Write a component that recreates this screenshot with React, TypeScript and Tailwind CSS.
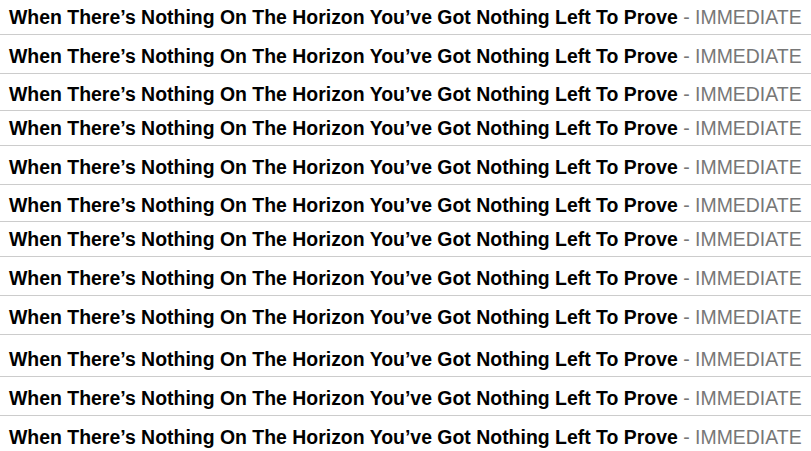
import React from "react";

const rows = [
  "pt-[6px] pb-[6px]",
  "pt-[10px] pb-[6px]",
  "pt-[9px] pb-[5px]",
  "pt-[6px] pb-[6px]",
  "pt-[10px] pb-[6px]",
  "pt-[9px] pb-[5px]",
  "pt-[6px] pb-[6px]",
  "pt-[10px] pb-[6px]",
  "pt-[10px] pb-[6px]",
  "pt-[13px] pb-[6px]",
  "pt-[10px] pb-[6px]",
  "pt-[10px] pb-[6px]",
];

export default function App() {
  return (
    <div className="w-[811px] h-[451px] overflow-hidden bg-white" style={{ fontFamily: '"Liberation Sans", Arial, sans-serif' }}>
      {rows.map((p, i) => (
        <div
          key={i}
          className={`${p} pl-[9px] whitespace-nowrap text-[19.45px] leading-[22px] ${i < rows.length - 1 ? "border-b border-[#cccccc]" : ""}`}
        >
          <span className="font-bold text-black">When There’s Nothing On The Horizon You’ve Got Nothing Left To Prove</span>
          <span className="text-[#777777]"> - IMMEDIATE</span>
        </div>
      ))}
    </div>
  );
}
